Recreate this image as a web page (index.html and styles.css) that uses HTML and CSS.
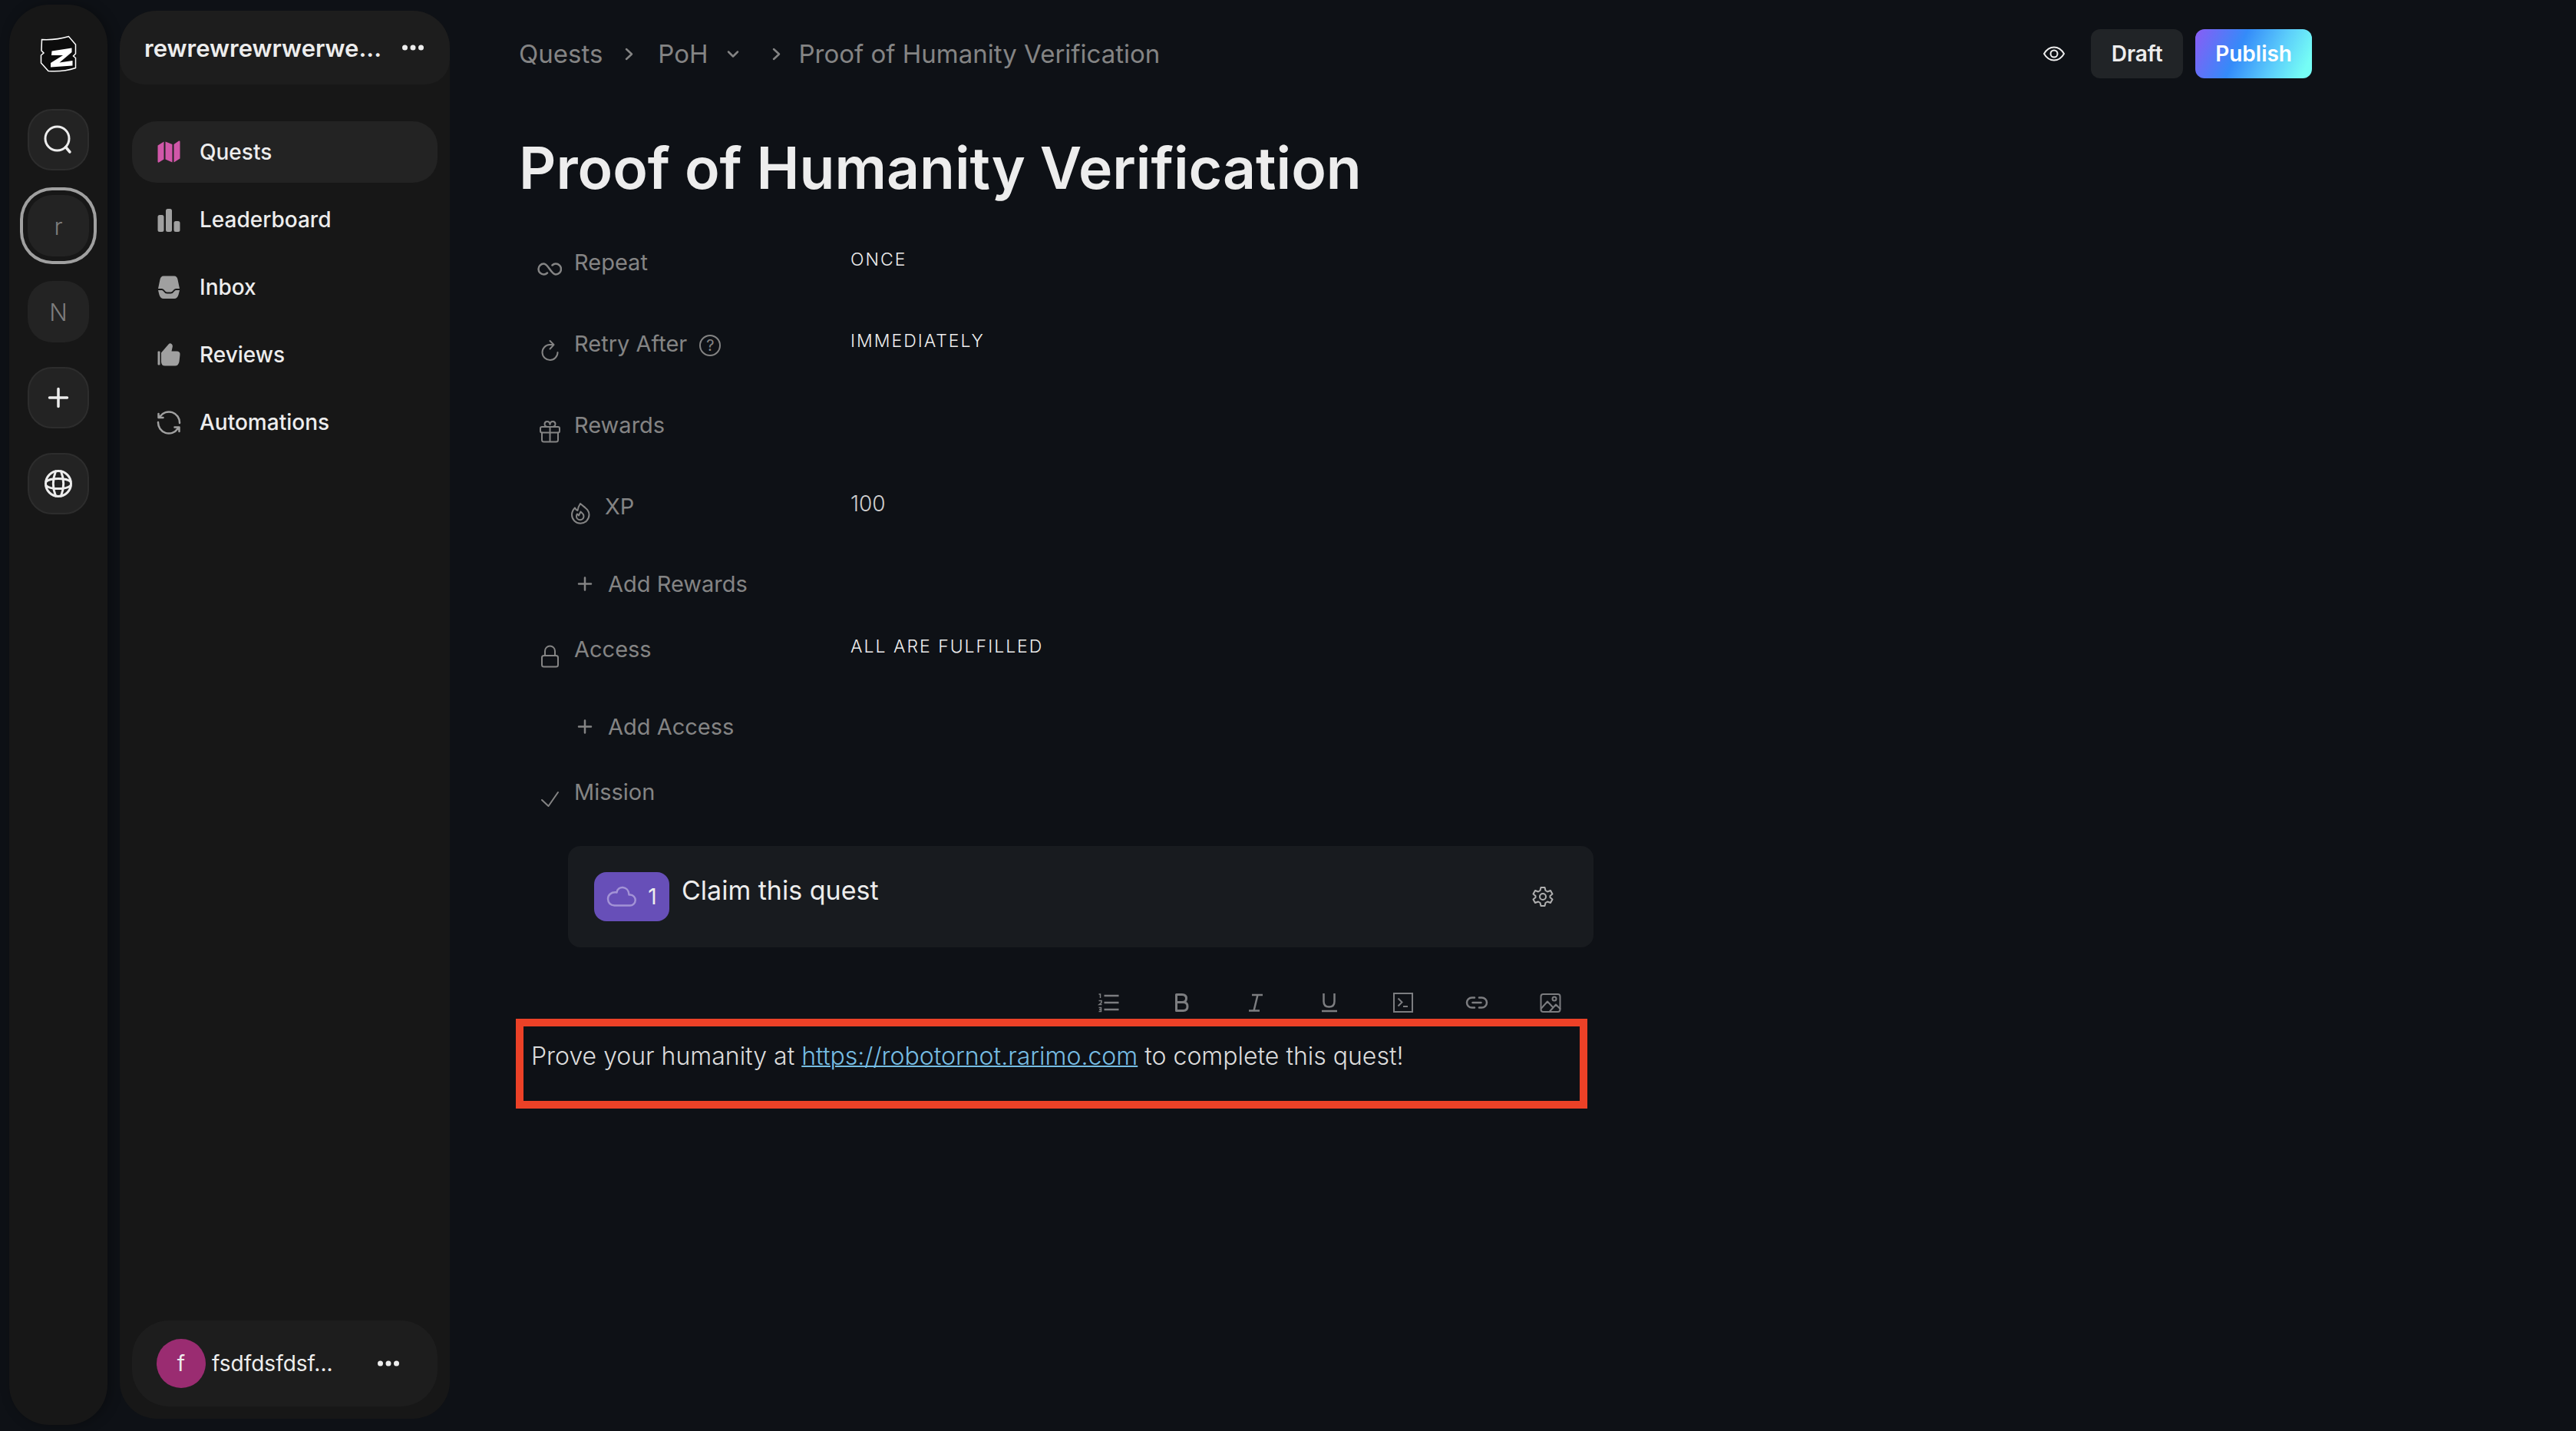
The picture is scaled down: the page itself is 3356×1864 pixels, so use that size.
FILE: index.html
```html
<!DOCTYPE html>
<html lang="en">
<head>
<meta charset="utf-8">
<meta name="viewport" content="width=device-width, initial-scale=1">
<title>Proof of Humanity Verification</title>
<link rel="stylesheet" href="styles.css">
</head>
<body>
<div class="app">
  <nav class="rail" aria-label="Communities">
    <a class="rail-logo" href="#" aria-label="Home">
      <svg viewBox="0 0 48 48" width="48" height="48">
        <path d="M2.500 5.500Q21 6.500 37.500 1.500L46.500 12V24L43.500 27L46.500 29.500V42.500Q30 48 11 46.500L1.500 36V26L5 23L2 20Z" fill="#0c0c0c" stroke="#fff" stroke-width="1.500"/>
        <path d="M15.500 20.500L41.500 16.500V22L25.500 35.500L42.500 33V39.500L14 41.500V36L30 26H15Z" fill="#fff"/>
      </svg>
    </a>
    <button class="rail-button rail-button--outlined" type="button" aria-label="Search">
      <svg viewBox="0 0 40 40" width="40" height="40" class="line"><circle cx="18.500" cy="18.500" r="15.500" stroke-width="3"/><path d="M29.500 29.500L35 36" stroke-width="3.500"/></svg>
    </button>
    <button class="rail-button rail-button--current" type="button">r</button>
    <button class="rail-button" type="button">N</button>
    <button class="rail-button rail-button--outlined" type="button" aria-label="Create">
      <svg viewBox="0 0 40 40" width="40" height="40" class="line"><path d="M20 8.500V31.500M8.500 20H31.500" stroke-width="3.500"/></svg>
    </button>
    <button class="rail-button rail-button--outlined" type="button" aria-label="Explore">
      <svg viewBox="0 0 40 40" width="40" height="40" class="line" stroke-width="3"><circle cx="20" cy="20" r="16.500"/><path d="M16.500 4C12.500 14 12.500 26 16.500 36M23.500 4C27.500 14 27.500 26 23.500 36M4 17.500Q8 13.500 20 13.500T36 17.500M4 22.500Q8 26.500 20 26.500T36 22.500"/></svg>
    </button>
  </nav>

  <aside class="sidebar">
    <header class="sidebar-header">
      <span class="sidebar-name">rewrewrewrwerwe...</span>
      <button class="dots-button" type="button" aria-label="Community menu">
        <svg viewBox="0 0 32 32" width="32" height="32" fill="currentColor"><circle cx="5.500" cy="16" r="3.500"/><circle cx="16" cy="16" r="3.500"/><circle cx="26.500" cy="16" r="3.500"/></svg>
      </button>
    </header>
    <nav class="menu" aria-label="Community">
      <a class="menu-item menu-item--active" href="#" aria-current="page">
        <svg viewBox="0 0 32 32" width="32" height="32" fill="currentColor"><path d="M1.500 7.500L9.500 2.500V25.500L3 29.500Q1.500 30 1.500 28.500ZM11.500 2.500L20.500 6V29.500L11.500 25.500ZM22.500 6L29 1.500Q30.500 1 30.500 2.500V24.500L22.500 29.500Z"/></svg>
        Quests
      </a>
      <a class="menu-item" href="#">
        <svg viewBox="0 0 32 32" width="32" height="32" fill="currentColor"><rect x="1.500" y="10" width="8" height="22" rx="2.500"/><rect x="12" y="2" width="8" height="30" rx="2.500"/><rect x="22.500" y="18" width="8" height="14" rx="2.500"/></svg>
        Leaderboard
      </a>
      <a class="menu-item" href="#">
        <svg viewBox="0 0 32 32" width="32" height="32" fill="currentColor"><path d="M2 18L4.500 6Q5.500 1.500 9 1.500H23Q26.500 1.500 27.500 6L30 18H25Q23 18 21.500 20.500Q20 22.500 18.500 22.500H13.500Q12 22.500 10.500 20.500Q9 18 7 18Z"/><path d="M2 20H7Q8 20 9 21.500Q11 24.500 13.500 24.500H18.500Q21 24.500 23 21.500Q24 20 25 20H30L28.500 26Q27 31 23 31H9Q5 31 3.500 26Z"/></svg>
        Inbox
      </a>
      <a class="menu-item" href="#">
        <svg viewBox="0 0 32 32" width="32" height="32" fill="currentColor"><rect x="1.500" y="11.500" width="3" height="18" rx="1"/><path d="M6 13.500L15.500 2.500Q17.500 0.500 19.500 2Q21.500 3.500 20.500 7L19.500 11.500H26Q31 11.500 30.500 16L29.500 25Q28.500 30.500 24 30.500H11Q6 30.500 6 25Z"/></svg>
        Reviews
      </a>
      <a class="menu-item" href="#">
        <svg viewBox="0 0 32 32" width="32" height="32" class="line" stroke-width="2.500"><path d="M30 17A14 14 0 0 0 4.500 8.500M2 16A14 14 0 0 0 27.500 24.500M2.500 5V10H8.500M29.500 28V22.500H23.500"/></svg>
        Automations
      </a>
    </nav>
    <footer class="profile">
      <span class="avatar">f</span>
      <span class="profile-name">fsdfdsfdsf...</span>
      <button class="dots-button" type="button" aria-label="Account menu">
        <svg viewBox="0 0 32 32" width="32" height="32" fill="currentColor"><circle cx="5.500" cy="16" r="3.500"/><circle cx="16" cy="16" r="3.500"/><circle cx="26.500" cy="16" r="3.500"/></svg>
      </button>
    </footer>
  </aside>

  <main class="page">
    <header class="topbar">
      <nav class="breadcrumb" aria-label="Breadcrumb">
        <a href="#">Quests</a>
        <svg class="crumb-next line" viewBox="0 0 20 20" width="20" height="20" stroke-width="2.500"><path d="M7 4L14 10.500L7 17"/></svg>
        <button class="crumb-menu" type="button">PoH
          <svg viewBox="0 0 20 20" width="20" height="20" class="line" stroke-width="2.500"><path d="M4 7.500L10 13.500L16 7.500"/></svg>
        </button>
        <svg class="crumb-last line" viewBox="0 0 20 20" width="20" height="20" stroke-width="2.500"><path d="M7 4L14 10.500L7 17"/></svg>
        <span>Proof of Humanity Verification</span>
      </nav>
      <div class="actions">
        <button class="icon-button icon-button--preview" type="button" aria-label="Preview">
          <svg viewBox="0 0 32 32" width="32" height="32" class="line" stroke-width="2"><path d="M3 16Q8 7.500 16 7.500T29 16Q24 24.500 16 24.500T3 16Z"/><circle cx="16" cy="16" r="4.500"/></svg>
        </button>
        <button class="button button--draft" type="button">Draft</button>
        <button class="button button--publish" type="button">Publish</button>
      </div>
    </header>

    <h1 class="title">Proof of Humanity Verification</h1>

    <div class="quest">
      <dl class="fields">
        <div class="field">
          <dt class="label">
            <svg viewBox="0 0 32 32" width="32" height="32" class="line" stroke-width="2.500"><path d="M13 21.500Q11 23.500 8.500 23.500A7 7 0 0 1 8.500 9.500C14 9.500 18 23.500 24 23.500A7 7 0 0 0 24 9.500Q21.500 9.500 19.500 11.500"/></svg>
            Repeat
          </dt>
          <dd class="value">ONCE</dd>
        </div>
        <div class="field">
          <dt class="label">
            <svg viewBox="0 0 32 32" width="32" height="32" class="line" stroke-width="2"><path d="M20 9H16A10 10 0 1 0 26.500 19M16.500 4L21.500 9L16.500 14.500"/></svg>
            Retry After
            <button class="help" type="button" aria-label="About retries">?</button>
          </dt>
          <dd class="value">IMMEDIATELY</dd>
        </div>
        <div class="field">
          <dt class="label">
            <svg viewBox="0 0 32 32" width="32" height="32" class="line" stroke-width="2"><rect x="4" y="10" width="25" height="7.500" rx="2"/><path d="M6 17.500V27Q6 29.500 8.500 29.500H24.500Q27 29.500 27 27V17.500M16.500 10V29.500M16.500 10C12 10.500 9.500 9 9.500 6.500C9.500 2 16 1.500 16.500 7C17 1.500 23.500 2 23.500 6.500C23.500 9 21 10.500 16.500 10"/></svg>
            Rewards
          </dt>
          <dd class="value"></dd>
        </div>
        <div class="field field--tight">
          <dt class="label label--nested">
            <svg viewBox="0 0 32 32" width="32" height="32" class="line" stroke-width="2"><path d="M16 4C14 7 13 9 12.500 13Q10.500 12.500 9 9.500C6 12.500 5 15.500 5 18.500A11 11 0 0 0 27.500 18.500C27.500 11.500 22 9.500 16 4Z"/><path d="M16.500 14.500C18 16.500 20.500 17 20.500 20.500A4.500 4.500 0 0 1 11 20.500Q11 18.500 12 17.500L14 19.500Z"/></svg>
            XP
          </dt>
          <dd class="value value--number">100</dd>
        </div>
        <div class="field field--add">
          <dt><button class="add" type="button">
            <svg viewBox="0 0 32 32" width="32" height="32" class="line" stroke-width="2.500"><path d="M16 8.500V24.500M8 16.500H24"/></svg>
            Add Rewards
          </button></dt>
        </div>
        <div class="field field--tight">
          <dt class="label">
            <svg viewBox="0 0 32 32" width="32" height="32" class="line" stroke-width="2"><rect x="6" y="16" width="21" height="14.500" rx="2.500"/><path d="M10 16V10A6.500 6.500 0 0 1 23 10V16"/></svg>
            Access
          </dt>
          <dd class="value">ALL ARE FULFILLED</dd>
        </div>
        <div class="field field--add">
          <dt><button class="add" type="button">
            <svg viewBox="0 0 32 32" width="32" height="32" class="line" stroke-width="2.500"><path d="M16 8.500V24.500M8 16.500H24"/></svg>
            Add Access
          </button></dt>
        </div>
        <div class="field field--mission">
          <dt class="label">
            <svg viewBox="0 0 32 32" width="32" height="32" class="line" stroke-width="2"><path d="M6 18L14.500 26L27 8"/></svg>
            Mission
          </dt>
          <dd class="value"></dd>
        </div>
      </dl>

      <section class="mission">
        <span class="badge">
          <svg viewBox="0 0 40 32" width="40" height="32" class="line" stroke-width="2.500"><path d="M10.500 27.500H30.500A7 7 0 0 0 31 13.500H29.500C29 1 14 1.500 13.500 10.500C6 9.500 2 14 2 19Q2.500 27 10.500 27.500Z"/></svg>
          1
        </span>
        <h2 class="mission-title">Claim this quest</h2>
        <button class="icon-button" type="button" aria-label="Mission settings">
          <svg viewBox="0 0 32 32" width="32" height="32" class="line" stroke-width="2"><path d="M13.500 4H18.500L19.500 8L22 9.500L26 8L28.500 12.500L25.500 15V17L28.500 19.500L26 24L22 22.500L19.500 24L18.500 28H13.500L12.500 24L10 22.500L6 24L3.500 19.500L6.500 17V15L3.500 12.500L6 8L10 9.500L12.500 8Z"/><circle cx="16" cy="16" r="4"/></svg>
        </button>
      </section>

      <div class="toolbar" role="toolbar" aria-label="Formatting">
        <button class="icon-button" type="button" aria-label="Numbered list"><svg viewBox="0 0 32 32" width="32" height="32" fill="none" stroke="currentColor"><path d="M10.500 7H29.500M10.500 16H29.500M10.500 25H29.500" stroke-width="2.500"/><path d="M3.500 5H5.500V10M3.500 13.500H7V16L4 18.500H7.500M3.500 22.500H6.500V27.500H3.500M4 25H6.500" stroke-width="1.500"/></svg></button>
        <button class="icon-button" type="button" aria-label="Bold"><svg viewBox="0 0 32 32" width="32" height="32" class="line" stroke-width="3"><path d="M8.500 5.500H16Q21.500 5.500 21.500 10.500T16 15.500H8.500ZM8.500 15.500H17.500Q23 15.500 23 21T17.500 26.500H8.500Z"/></svg></button>
        <button class="icon-button" type="button" aria-label="Italic"><svg viewBox="0 0 32 32" width="32" height="32" fill="none" stroke="currentColor" stroke-width="2.500"><path d="M11 6H25M7 26.500H21M18.500 6L13.500 26.500"/></svg></button>
        <button class="icon-button" type="button" aria-label="Underline"><svg viewBox="0 0 32 32" width="32" height="32" fill="none" stroke="currentColor" stroke-width="2.500"><path d="M8.500 4V14.500Q8.500 21.500 15.500 21.500T22.500 14.500V4M6 27H26"/></svg></button>
        <button class="icon-button" type="button" aria-label="Code block"><svg viewBox="0 0 32 32" width="32" height="32" fill="none" stroke="currentColor" stroke-width="2"><path d="M4 4H28V28H4ZM9.500 10.500L14.500 15.500L9.500 20.500M16 21H22"/></svg></button>
        <button class="icon-button" type="button" aria-label="Link"><svg viewBox="0 0 32 32" width="32" height="32" class="line" stroke-width="2.500"><path d="M13 9.500H9.500A6.500 6.500 0 0 0 9.500 22.500H13M19 9.500H22.500A6.500 6.500 0 0 1 22.500 22.500H19M10.500 16H21.500"/></svg></button>
        <button class="icon-button" type="button" aria-label="Image"><svg viewBox="0 0 32 32" width="32" height="32" class="line" stroke-width="2"><rect x="3.500" y="5" width="25" height="23" rx="3"/><circle cx="21" cy="11" r="2.500"/><path d="M4 23.500L12 14.500L19 22M14.500 28L23 18.500L28.500 24"/></svg></button>
      </div>

      <div class="editor">
        <p>Prove your humanity at <a href="https://robotornot.rarimo.com">https://robotornot.rarimo.com</a> to complete this quest!</p>
      </div>
    </div>
  </main>
</div>
</body>
</html>
```
FILE: styles.css
```css
:root {
  --bg: #0e1116;
  --panel: #171717;
  --panel-raised: #1d1d1d;
  --control: #232323;
  --text: #ededed;
  --muted: #848484;
}

* { box-sizing: border-box; }

body {
  margin: 0;
  background: var(--bg);
  color: var(--text);
  font-family: Inter, "Liberation Sans", sans-serif;
}

button {
  padding: 0;
  border: 0;
  background: none;
  color: inherit;
  font: inherit;
  cursor: pointer;
}

a { color: inherit; text-decoration: none; }

svg { flex: none; display: block; }

.line {
  fill: none;
  stroke: currentColor;
  stroke-linecap: round;
  stroke-linejoin: round;
}

.app { display: flex; min-height: 100vh; }

/* Community rail */
.rail {
  display: flex;
  flex: none;
  flex-direction: column;
  align-items: center;
  gap: 32px;
  width: 128px;
  margin: 6px 0 8px 12px;
  padding-top: 40px;
  border-radius: 52px;
  background: var(--panel);
  box-shadow: 4px 0 16px rgba(0, 0, 0, 0.3);
}

.rail-logo { margin-bottom: 16px; }

.rail-button {
  display: flex;
  align-items: center;
  justify-content: center;
  width: 80px;
  height: 80px;
  border-radius: 32px;
  background: var(--control);
  color: #7d7d7d;
  font-size: 31px;
  font-weight: 300;
}

.rail-button--outlined { border: 2px solid #2d2d2d; color: var(--text); }

.rail-button--current {
  box-shadow: 0 0 0 6px var(--panel), 0 0 0 10px #a0a0a0;
}

/* Community sidebar */
.sidebar {
  display: flex;
  flex: none;
  flex-direction: column;
  width: 430px;
  margin: 14px 0 16px 16px;
  border-radius: 48px;
  background: var(--panel);
}

.sidebar-header {
  display: flex;
  align-items: center;
  justify-content: space-between;
  height: 96px;
  padding: 0 32px;
  border-radius: 48px 48px 32px 32px;
  background: var(--panel-raised);
  font-size: 31px;
  font-weight: 600;
}

.menu {
  display: flex;
  flex-direction: column;
  gap: 8px;
  margin-top: 48px;
  padding: 0 16px;
}

.menu-item {
  display: flex;
  align-items: center;
  gap: 24px;
  height: 80px;
  padding: 0 32px;
  border-radius: 32px;
  font-size: 28px;
  font-weight: 500;
}

.menu-item svg { color: #a0a0a0; }
.menu-item--active { background: var(--control); }
.menu-item--active svg { color: #d157a9; }

.profile {
  display: flex;
  align-items: center;
  gap: 8px;
  height: 112px;
  margin: auto 16px 16px;
  padding: 0 48px 0 32px;
  border-radius: 48px;
  background: var(--panel-raised);
  font-size: 28px;
}

.avatar {
  display: flex;
  align-items: center;
  justify-content: center;
  width: 64px;
  height: 64px;
  border-radius: 50%;
  background: #9a2c71;
}

.profile-name { flex: 1; }

/* Quest page */
.page { flex: 1; padding: 38px 90px; }

.topbar {
  display: flex;
  align-items: center;
  justify-content: space-between;
  max-width: 2336px;
  height: 64px;
}

.breadcrumb {
  display: flex;
  align-items: center;
  color: var(--muted);
  font-size: 33px;
  font-weight: 400;
}

.crumb-next { margin: 0 28px 0 24px; }
.crumb-menu { display: flex; align-items: center; gap: 22px; }
.crumb-last { margin: 0 20px 0 36px; }

.actions { display: flex; align-items: center; gap: 16px; }

.icon-button {
  display: flex;
  align-items: center;
  justify-content: center;
  width: 48px;
  height: 42px;
}

.icon-button--preview { margin-right: 8px; }

.button {
  min-width: 120px;
  height: 64px;
  padding: 0 26px;
  border-radius: 12px;
  font-size: 28px;
  font-weight: 600;
}

.button--draft { background: #212427; }

.button--publish {
  background: linear-gradient(115deg, #8a5cf5 0%, #348bf9 38%, #5ccdfb 68%, #75fdf5 92%);
  color: #fff;
}

.title {
  margin: 69px 0 53px;
  font-size: 75px;
  font-weight: 600;
  line-height: 96px;
}

.quest { max-width: 1400px; }

.fields { margin: 0; }

.field { display: flex; min-height: 106px; }
.field--tight { min-height: 100px; }
.field--add { min-height: 86px; }
.field--mission { min-height: 92px; }

.label {
  display: flex;
  align-items: flex-start;
  gap: 16px;
  width: 432px;
  padding-left: 24px;
  color: var(--muted);
  font-size: 29px;
  font-weight: 400;
  line-height: 44px;
}

.label--nested { padding-left: 64px; }
.label > svg { margin-top: 14px; }

.help {
  width: 28px;
  height: 28px;
  margin-top: 10px;
  border: 2px solid currentColor;
  border-radius: 50%;
  font-size: 20px;
  font-weight: 400;
  line-height: 24px;
}

.value {
  margin: 0;
  font-size: 23px;
  font-weight: 350;
  letter-spacing: 2px;
  line-height: 36px;
}

.value--number {
  color: #d0d0d0;
  font-size: 28px;
  font-weight: 350;
  letter-spacing: normal;
}

.add {
  display: flex;
  align-items: center;
  gap: 14px;
  height: 44px;
  margin-left: 70px;
  color: var(--muted);
  font-size: 29px;
  font-weight: 400;
}

.mission {
  display: flex;
  align-items: center;
  gap: 16px;
  margin-left: 64px;
  padding: 34px 42px 34px 34px;
  border-radius: 16px;
  background: #181b1f;
}

.mission .icon-button { color: #b0b0b0; }

.badge {
  display: flex;
  align-items: center;
  justify-content: center;
  gap: 14px;
  width: 98px;
  height: 64px;
  border-radius: 16px;
  background: #674fb8;
  font-size: 28px;
}

.badge svg { color: #a393d6; }

.mission-title {
  flex: 1;
  align-self: flex-start;
  margin: 0;
  font-size: 34px;
  font-weight: 400;
  line-height: 48px;
}

.toolbar {
  display: flex;
  justify-content: flex-end;
  gap: 48px;
  margin-top: 51px;
  padding-right: 32px;
  color: #7c7d80;
}

.editor {
  min-height: 117px;
  margin: 0 8px 0 -4px;
  padding: 14px 10px;
  border: 10px solid #ec4127;
  color: #dcdcdc;
  font-size: 32px;
  font-weight: 350;
  line-height: 50px;
}

.editor p { margin: 0; }

.editor a {
  color: #76bde3;
  text-decoration: underline;
  text-decoration-thickness: 2px;
}
```
